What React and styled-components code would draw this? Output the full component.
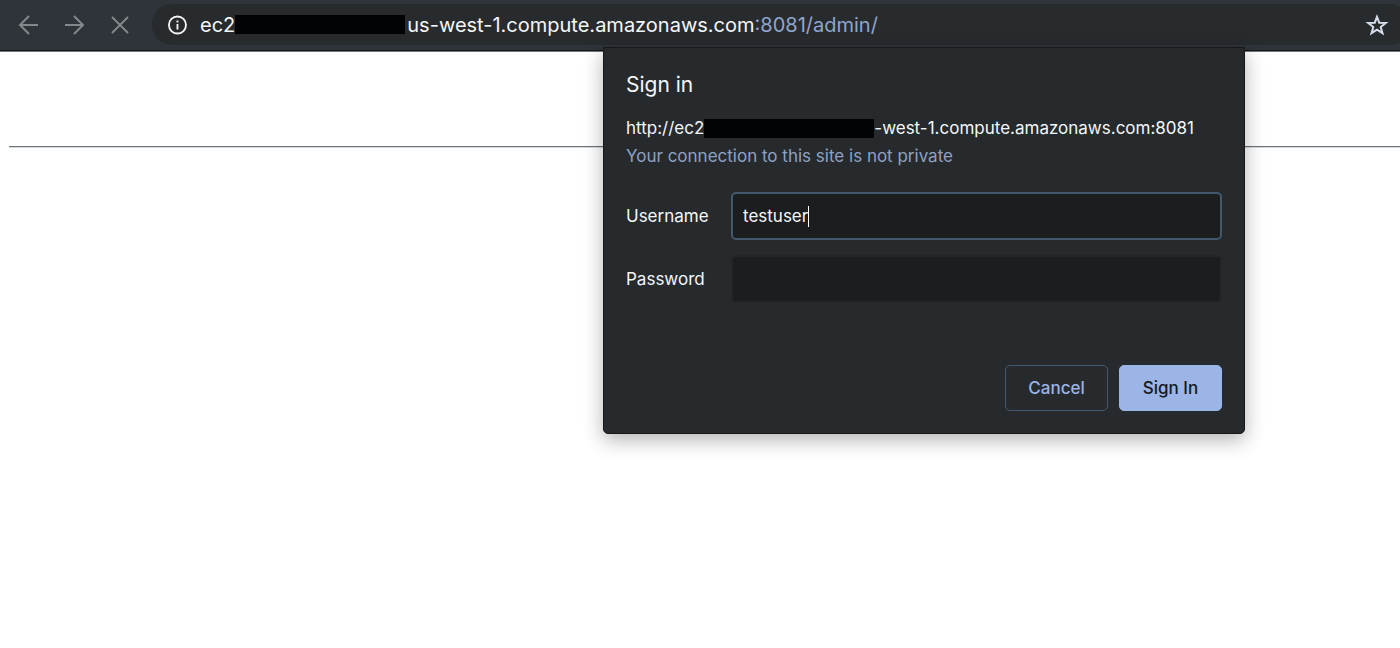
import React from "react";
import styled, { createGlobalStyle } from "styled-components";

const GlobalStyle = createGlobalStyle`
  * { box-sizing: border-box; }
  body {
    margin: 0;
    background: #fff;
    color: #f4f6f8;
    font-family: Inter, "Liberation Sans", sans-serif;
  }
  button, input { font: inherit; }
`;

const Browser = styled.div`
  position: relative;
  min-height: 100vh;
  overflow: hidden;
`;

const Toolbar = styled.header`
  display: flex;
  align-items: center;
  height: 52px;
  padding: 0 0 2px 16px;
  background: #2e3439;
  border-bottom: 1px solid #75777a;
  box-shadow: inset 0 -1px #151719;
`;

const Navigation = styled.nav`
  display: flex;
  flex: none;
  gap: 22px;
  margin-right: 20px;
`;

const IconButton = styled.button`
  display: flex;
  flex: none;
  padding: 0;
  border: 0;
  background: none;
  color: ${(p) => p.$color || "#84888b"};
`;

const AddressBar = styled.div`
  display: flex;
  flex: 1;
  align-items: center;
  height: 41px;
  margin-right: -10px;
  padding: 0 21px 0 14px;
  border-radius: 20px;
  background: #282b2e;
`;

const Address = styled.div`
  display: flex;
  flex: 1;
  align-items: center;
  margin-left: 12px;
  font-size: 20px;
  line-height: 24px;
  white-space: nowrap;
`;

const AddressPath = styled.span`
  color: #8fa5cc;
`;

const Redaction = styled.span`
  flex: none;
  width: 170px;
  height: 19px;
  margin-right: ${(p) => p.$gap || 0}px;
  background: #020304;
`;

const Page = styled.main`
  padding: 94px 0 0 9px;
`;

const Rule = styled.hr`
  height: 2px;
  margin: 0;
  border: 0;
  border-top: 1px solid #6d7478;
  background: #d5dade;
`;

const Dialog = styled.form`
  position: absolute;
  top: 47px;
  right: 155px;
  width: 642px;
  padding: 23px 22px 22px;
  border: 1px solid #151719;
  border-radius: 0 0 5px 5px;
  background: #272a2d;
  box-shadow: 0 6px 20px rgba(0, 0, 0, 0.3);
  font-size: 17px;
  line-height: 28px;
`;

const Title = styled.h1`
  margin: 0 0 15px;
  font-size: 21px;
  font-weight: 400;
  line-height: 28px;
`;

const Origin = styled.div`
  display: flex;
  align-items: center;
  white-space: nowrap;
`;

const Warning = styled.p`
  margin: 0;
  color: #8fa1c0;
`;

const Fields = styled.div`
  display: grid;
  grid-template-columns: 105px 1fr;
  align-items: center;
  row-gap: 15px;
  margin-top: 22px;
`;

const Field = styled.div`
  display: flex;
  align-items: center;
  height: 48px;
  padding: 0 10px;
  border: 2px solid ${(p) => (p.$active ? "#42586c" : "#232629")};
  border-radius: 5px;
  background: #1c1d1f;
`;

const TextInput = styled.input`
  ${(p) => (p.$fit ? "field-sizing: content;" : "flex: 1; min-width: 0;")}
  padding: 0;
  border: 0;
  outline: 0;
  background: none;
  color: #f4f6f8;
`;

const Caret = styled.span`
  width: 1px;
  height: 21px;
  background: #fff;
`;

const Actions = styled.div`
  display: flex;
  justify-content: flex-end;
  gap: 11px;
  margin-top: 62px;
`;

const ActionButton = styled.button`
  width: 103px;
  height: 46px;
  padding: 0;
  border: 1px solid ${(p) => (p.$primary ? "#9ab5e6" : "#42586c")};
  border-radius: 5px;
  background: ${(p) => (p.$primary ? "#9ab5e6" : "transparent")};
  color: ${(p) => (p.$primary ? "#16191d" : "#9ab5e6")};
  font-weight: 500;
`;

function Icon({ children, size = 24, width = 2 }) {
  return (
    <svg width={size} height={size} viewBox="0 0 24 24" fill="none" stroke="currentColor" strokeWidth={width} aria-hidden="true">
      {children}
    </svg>
  );
}

export default function App() {
  return (
    <Browser>
      <GlobalStyle />
      <Toolbar>
        <Navigation aria-label="Browser">
          <IconButton aria-label="Back">
            <Icon><path d="M22 12H4M13 3l-9 9 9 9" /></Icon>
          </IconButton>
          <IconButton aria-label="Forward">
            <Icon><path d="M3 12h18M12 3l9 9-9 9" /></Icon>
          </IconButton>
          <IconButton aria-label="Stop loading">
            <Icon><path d="M4 4l16 16M20 4L4 20" /></Icon>
          </IconButton>
        </Navigation>
        <AddressBar>
          <IconButton $color="#f4f6f8" aria-label="Site information">
            <Icon size={22}>
              <circle cx="12.5" cy="12" r="9.3" />
              <path d="M12.5 11v6M12.5 7v2.2" />
            </Icon>
          </IconButton>
          <Address>
            <span>ec2</span>
            <Redaction $gap={2} />
            <span>us-west-1.compute.amazonaws.com</span>
            <AddressPath>:8081/admin/</AddressPath>
          </Address>
          <IconButton $color="#d5dcea" aria-label="Bookmark this page">
            <Icon>
              <path d="M12 3.8l2.2 5.9 6.6.3-5.1 4 1.8 6.2-5.5-3.6-5.5 3.6 1.8-6.2-5.1-4 6.6-.3z" />
            </Icon>
          </IconButton>
        </AddressBar>
      </Toolbar>
      <Page>
        <Rule />
      </Page>
      <Dialog role="dialog" aria-labelledby="title" onSubmit={(e) => e.preventDefault()}>
        <Title id="title">Sign in</Title>
        <Origin>
          <span>http://ec2</span>
          <Redaction />
          <span>-west-1.compute.amazonaws.com:8081</span>
        </Origin>
        <Warning>Your connection to this site is not private</Warning>
        <Fields>
          <label htmlFor="username">Username</label>
          <Field $active>
            <TextInput id="username" $fit defaultValue="testuser" />
            <Caret />
          </Field>
          <label htmlFor="password">Password</label>
          <Field>
            <TextInput id="password" type="password" />
          </Field>
        </Fields>
        <Actions>
          <ActionButton type="button">Cancel</ActionButton>
          <ActionButton type="submit" $primary>Sign In</ActionButton>
        </Actions>
      </Dialog>
    </Browser>
  );
}
